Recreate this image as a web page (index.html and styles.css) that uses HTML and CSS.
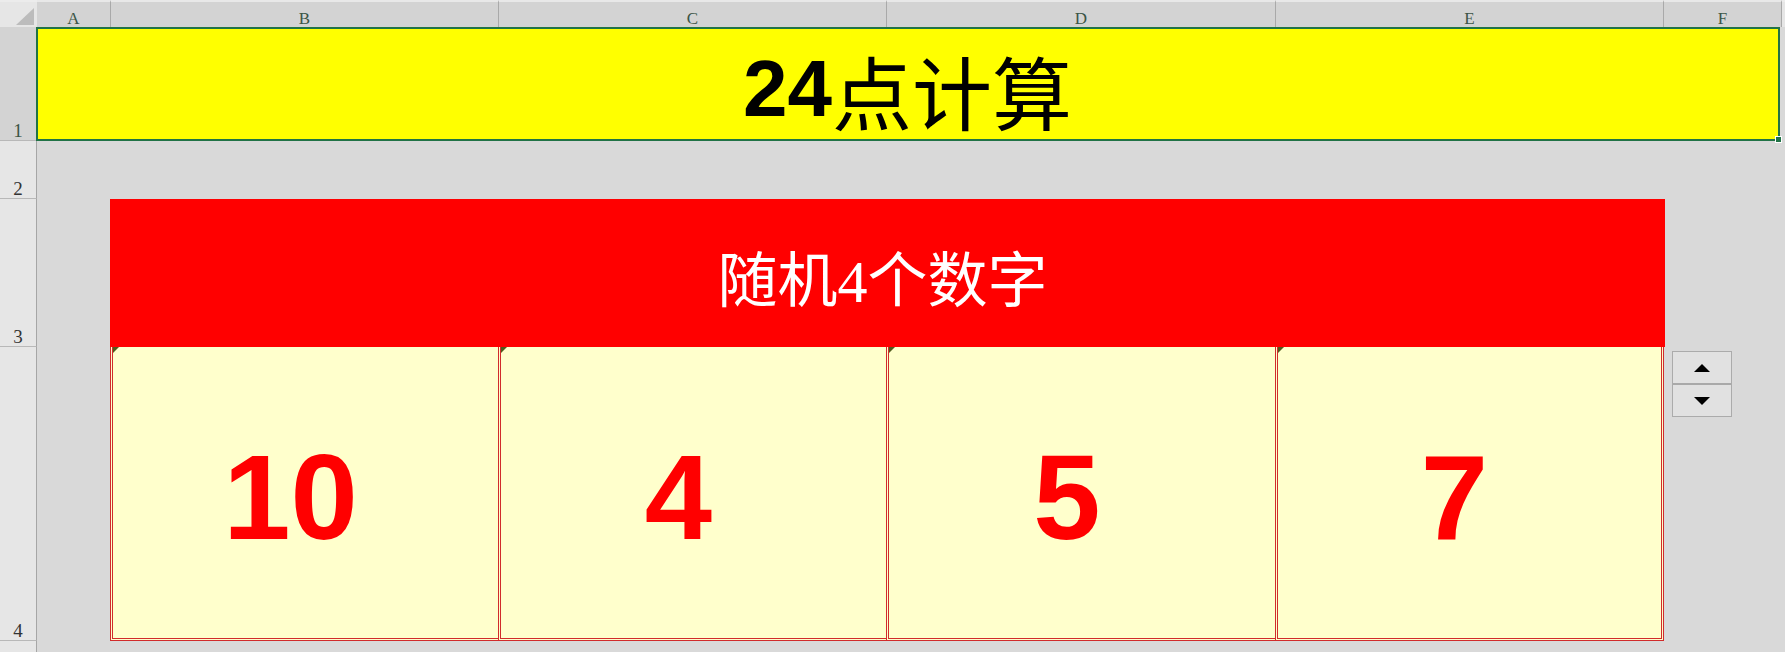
FILE: index.html
```html
<!DOCTYPE html>
<html lang="zh-CN">
<head>
<meta charset="utf-8">
<title>24点计算</title>
<link rel="stylesheet" href="styles.css">
</head>
<body>
<div class="sheet">
  <div class="corner"><svg class="corner-tri" width="37" height="27" viewBox="0 0 37 27"><polygon points="16,25 34,25 34,8" fill="#bcbcbc"/></svg></div>
  <div class="colhead">A</div>
  <div class="colhead">B</div>
  <div class="colhead">C</div>
  <div class="colhead">D</div>
  <div class="colhead">E</div>
  <div class="colhead">F</div>
  <div class="colhead-rest"></div>

  <div class="rowhead sel r1">1</div>
  <div class="rowhead r2">2</div>
  <div class="rowhead r3">3</div>
  <div class="rowhead r4">4</div>
  <div class="rowhead r5"></div>

  <div class="title">
    <span class="title-num">24</span><span class="title-cjk">点计算</span>
    <span class="fill-handle"></span>
  </div>

  <div class="panel">
    <div class="panel-head">随机4个数字</div>
    <div class="cards">
      <div class="card"><span class="flag"></span><span class="num">10</span></div>
      <div class="card"><span class="flag"></span><span class="num">4</span></div>
      <div class="card"><span class="flag"></span><span class="num">5</span></div>
      <div class="card last"><span class="flag"></span><span class="num">7</span></div>
    </div>
  </div>

  <div class="spin">
    <div class="spin-btn"><svg width="16" height="8" viewBox="0 0 16 8"><polygon points="8,0 16,8 0,8" fill="#000"/></svg></div>
    <div class="spin-btn down"><svg width="16" height="8" viewBox="0 0 16 8"><polygon points="0,0 16,0 8,8" fill="#000"/></svg></div>
  </div>
</div>
</body>
</html>
```

FILE: styles.css
```css
html, body {
  margin: 0;
  padding: 0;
  background: #d9d9d9;
}

.sheet {
  display: grid;
  grid-template-columns: 37px 74px 388px 388px 389px 388px 118px 1fr;
  grid-template-rows: 27px 114px 58px 148px 294px 1fr;
  width: 1785px;
  height: 652px;
  overflow: hidden;
  background: #d9d9d9;
  font-family: "Liberation Serif", "Noto Sans CJK SC", serif;
}

.corner {
  grid-row: 1;
  grid-column: 1;
  background: #e6e6e6;
  border-top: 2px solid #ececec;
  box-sizing: border-box;
  position: relative;
}

.corner-tri {
  position: absolute;
  left: 0;
  top: -2px;
}

.colhead {
  grid-row: 1;
  background: #d3d3d3;
  border-top: 2px solid #e8e8e8;
  border-right: 1px solid #a9a9a9;
  box-sizing: border-box;
  display: flex;
  align-items: flex-end;
  justify-content: center;
  font-size: 17px;
  line-height: 17px;
  color: #3b5546;
}

.colhead-rest {
  grid-row: 1;
  background: #e6e6e6;
  border-top: 2px solid #ececec;
}

.rowhead {
  grid-column: 1;
  background: #e6e6e6;
  border-right: 1px solid #a6a6a6;
  border-bottom: 1px solid #b8b8b8;
  box-sizing: border-box;
  display: flex;
  align-items: flex-end;
  justify-content: center;
  font-size: 19px;
  line-height: 19px;
  color: #333;
}

.rowhead.sel {
  background: #d3d3d3;
  color: #3b5546;
}

.r1 { grid-row: 2; }
.r2 { grid-row: 3; }
.r3 { grid-row: 4; }
.r4 { grid-row: 5; }
.r5 { grid-row: 6; border-bottom: none; }

.title {
  grid-row: 2;
  grid-column: 2 / 8;
  margin-right: 2px;
  background: #ffff00;
  border: 2px solid #217346;
  margin-left: -1px;
  box-sizing: border-box;
  display: flex;
  justify-content: center;
  align-items: flex-end;
  padding-bottom: 10px;
  padding-right: 1px;
  line-height: 80px;
  font-size: 80px;
  color: #000;
  position: relative;
}

.title-num {
  font-family: "Liberation Sans", Arial, sans-serif;
  font-weight: bold;
}

.title-cjk {
  font-family: "Noto Sans CJK SC", sans-serif;
  font-weight: 400;
}

.fill-handle {
  position: absolute;
  right: -4px;
  bottom: -4px;
  width: 5px;
  height: 5px;
  background: #217346;
  border: 1px solid #ffffff;
  box-sizing: content-box;
}

.panel {
  grid-row: 4 / 6;
  grid-column: 3 / 7;
  display: flex;
  flex-direction: column;
  margin-left: -1px;
}

.panel-head {
  height: 148px;
  margin-right: -1px;
  background: #ff0000;
  color: #ffffff;
  display: flex;
  align-items: center;
  justify-content: center;
  font-family: "Liberation Serif", "Noto Sans CJK SC", serif;
  font-size: 60px;
  padding-top: 4px;
  padding-right: 10px;
  box-sizing: border-box;
}

.cards {
  height: 294px;
  display: grid;
  grid-template-columns: 388px 388px 389px 389px;
}

.card {
  position: relative;
  background: #ffffcc;
  border-left: 3px double #d12b2b;
  border-bottom: 3px double #d12b2b;
  box-sizing: border-box;
  display: flex;
  align-items: center;
  justify-content: center;
  padding-right: 30px;
  padding-top: 8px;
}

.card.last {
  border-right: 3px double #d12b2b;
}

.flag {
  position: absolute;
  left: 0;
  top: 0;
  width: 0;
  height: 0;
  border-top: 6px solid #4f5a1c;
  border-right: 6px solid transparent;
}

.num {
  font-family: "Liberation Sans", Arial, sans-serif;
  font-weight: bold;
  font-size: 121px;
  color: #ff0000;
}

.spin {
  grid-row: 5;
  grid-column: 7;
  align-self: start;
  justify-self: start;
  margin: 4px 0 0 8px;
  width: 60px;
  height: 66px;
  border: 1px solid #ababab;
  box-sizing: border-box;
  background: #e1e1e1;
  display: flex;
  flex-direction: column;
}

.spin-btn {
  flex: 1;
  display: flex;
  align-items: center;
  justify-content: center;
}

.spin-btn.down {
  border-top: 2px solid #a9a9a9;
}
```
